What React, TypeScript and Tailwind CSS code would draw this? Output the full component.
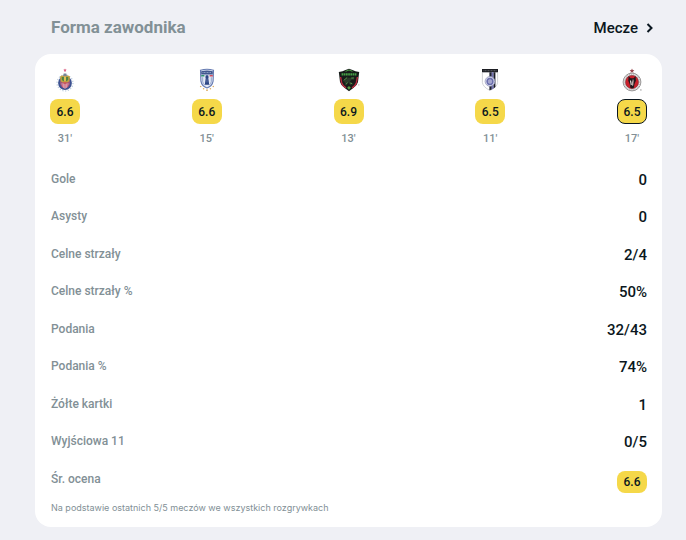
import type { ReactNode } from "react";
import clsx from "clsx";

function Guadalajara() {
  return (
    <svg viewBox="0 0 24 24" className="w-6 h-6" role="img" aria-label="Guadalajara">
      <path d="M12 .6l.5 1 1.2.1-.9.9.2 1.2-1-.6-1 .6.2-1.2-.9-.9 1.2-.1z" fill="#dc5c7e" />
      <circle cx="12" cy="15" r="8" fill="none" stroke="#b9cbdc" strokeWidth="1.2" strokeDasharray="1.2 1.6" />
      <circle cx="12" cy="15" r="6.9" fill="#3c5291" />
      <circle cx="12" cy="15" r="5" fill="#a3557b" />
      <path d="M8.5 15.5h7l-1 3.5-2.5 1.7L9.5 19z" fill="#d9d3e0" />
      <path d="M9.9 15.5v4M12 15.5v5M14.1 15.5v4" stroke="#d33f55" strokeWidth="1" />
      <path d="M7 8.4l1.8-1h6.4l1.8 1-.5 4.9L12 16l-4.5-2.7z" fill="#c2a242" />
      <path d="M8.7 9h2.2v4.6L8.9 12zM13.1 9h2.2l-.2 3-2 1.6z" fill="#4c8342" />
      <path d="M10.7 5.6h2.6l.7 2.6h-4z" fill="#788697" />
      <path d="M11.2 8.5h1.6v4.3h-1.6z" fill="#e8c65a" />
      <path d="M9.2 14.2h5.6l-2.8 2z" fill="#cf4a60" />
    </svg>
  );
}

function Pachuca() {
  return (
    <svg viewBox="0 0 24 24" className="w-6 h-6" role="img" aria-label="Pachuca">
      <path d="M5.5 2.2Q12 .3 18.5 2.2l-.4 11Q17.3 18.2 12 20 6.7 18.2 5.9 13.2z" fill="#e4e9f5" stroke="#6479b0" strokeWidth="1.1" />
      <path d="M6.2 3.2Q12 1.6 17.8 3.2v3.3H6.2z" fill="#41588f" />
      <path d="M7.5 4.5h9" stroke="#a9b7d5" strokeWidth=".7" strokeDasharray="1 .5" />
      <path d="M6.2 7h3.2v1.5H6.2z" fill="#2f9270" />
      <path d="M14.6 7h3.2v1.5h-3.2z" fill="#cf4b5e" />
      <path d="M7.7 9.2v4.6q.5 2.2 2 3.3M16.3 9.2v4.6q-.5 2.2-2 3.3" fill="none" stroke="#93a4cd" strokeWidth="1" />
      <path d="M10.8 7.3h2.4l.4 2-.3 1 .9 6.4H9.8l.9-6.4-.3-1z" fill="#2b4483" />
      <path d="M12 10.5v4" stroke="#8395bd" strokeWidth=".6" />
      <g fill="#dcae68">
        <circle cx="5.7" cy="18.5" r=".8" />
        <circle cx="8.6" cy="20.8" r=".8" />
        <circle cx="12" cy="22.2" r=".9" />
        <circle cx="15.4" cy="20.8" r=".8" />
        <circle cx="18.3" cy="18.5" r=".8" />
      </g>
    </svg>
  );
}

function Juarez() {
  return (
    <svg viewBox="0 0 24 24" className="w-6 h-6" role="img" aria-label="Juárez">
      <path d="M1.8 4Q6 3.8 8.5 2.1L12 .8l3.5 1.3Q18 3.8 22.2 4L21 14q-1 3.8-4.7 6L12 23.2 7.7 20Q4 17.8 3 14z" fill="#171c1a" />
      <path d="M8.5 3.3L12 2l3.5 1.3" fill="none" stroke="#55a84c" strokeWidth=".9" />
      <path d="M4.6 6.3h14.8" stroke="#469e46" strokeWidth="2.2" strokeDasharray="1.7 .5" />
      <path d="M3.6 9l1 5.7Q5.7 18.3 9 19.8M20.4 9l-1 5.7q-1.1 3.6-4.4 5.1" fill="none" stroke="#bb2c40" strokeWidth="1.4" />
      <path d="M7 13.3l4-3.6h4.2l2.3 2.2-2.6-.5-2.3 2.3 2.6 1.1-1.7 2.7-2.3-3.2-2.5 2z" fill="#2c3b2b" />
      <path d="M6.7 12.5l3.5-3M14.3 10h2.8M8.7 16.5l2-1.8M13.3 15.1l2 .8" stroke="#5fae50" strokeWidth=".9" />
      <path d="M12 18.1l1.8 1.6-1.8 2-1.8-2z" fill="#56a046" />
      <path d="M21.3 16.9h1" stroke="#777" strokeWidth=".7" />
    </svg>
  );
}

function Queretaro() {
  return (
    <svg viewBox="0 0 24 24" className="w-6 h-6" role="img" aria-label="Querétaro">
      <path d="M4.4 4.2h15.2v10.3q-.4 4.4-7.6 8-7.2-3.6-7.6-8z" fill="#fff" stroke="#c5c6cc" strokeWidth=".8" />
      <path d="M4 1h16v3.2H4z" fill="#1d1e23" />
      <path d="M5.6 2.7h12.8" stroke="#8d8f97" strokeWidth=".7" strokeDasharray=".8 .7" />
      <path d="M11.4 4.2h2.4v17.4l-2.4.7z" fill="#1f2233" />
      <path d="M13.8 4.2h1.8v16.2l-1.8 1z" fill="#7271b3" />
      <path d="M15.6 4.2h1.8v14.9l-1.8 1.3z" fill="#1b1d25" />
      <circle cx="12" cy="13.4" r="4.9" fill="#d9dbee" stroke="#8e91b6" strokeWidth=".7" />
      <circle cx="12" cy="13.4" r="3.6" fill="#6b6fae" />
      <path d="M10 12.2l2-1.2 2 1.2v2.5L12 16l-2-1.3z" fill="#a5a6ce" />
    </svg>
  );
}

function Tijuana() {
  return (
    <svg viewBox="0 0 24 24" className="w-6 h-6" role="img" aria-label="Tijuana">
      <path d="M12 .4l.7 1.5 1.7.2-1.3 1.1.4 1.7-1.5-.9-1.5.9.4-1.7-1.3-1.1 1.7-.2z" fill="#9b4b52" />
      <circle cx="12" cy="14" r="8.9" fill="#e9e8e8" stroke="#827f7f" strokeWidth=".8" />
      <circle cx="12" cy="14" r="7.9" fill="none" stroke="#aaa6a6" strokeWidth=".9" strokeDasharray="1 1" />
      <circle cx="12" cy="14" r="6.7" fill="#c9202b" stroke="#4b3134" strokeWidth=".4" />
      <path d="M8.6 8l2 2.2h3L15.6 8l.3 4.7-1.4 3.2-.8 4q-1.7.8-3.2 0l-.9-4-1.3-3.2z" fill="#21181b" />
      <path d="M9.9 12.2l1.2.5.6 3.6-.9 1.2z" fill="#efe7e4" />
      <path d="M13 10.8l.7 2-.5 4.6-1.2.4-.2-2.8z" fill="#bfaeab" />
      <circle cx="20.9" cy="21.9" r=".6" fill="#777" />
    </svg>
  );
}

const matches = [
  { crest: <Guadalajara />, rating: "6.6", minutes: "31'" },
  { crest: <Pachuca />, rating: "6.6", minutes: "15'" },
  { crest: <Juarez />, rating: "6.9", minutes: "13'" },
  { crest: <Queretaro />, rating: "6.5", minutes: "11'" },
  { crest: <Tijuana />, rating: "6.5", minutes: "17'", selected: true },
];

const stats = [
  { label: "Gole", value: "0" },
  { label: "Asysty", value: "0" },
  { label: "Celne strzały", value: "2/4" },
  { label: "Celne strzały %", value: "50%" },
  { label: "Podania", value: "32/43" },
  { label: "Podania %", value: "74%" },
  { label: "Żółte kartki", value: "1" },
  { label: "Wyjściowa 11", value: "0/5" },
];

function Rating({ children, className }: { children: ReactNode; className?: string }) {
  return (
    <span
      className={clsx(
        "inline-flex items-center justify-center w-[30px] rounded-lg bg-[#f5d849] text-xs font-medium text-[#0b1720]",
        className
      )}
    >
      {children}
    </span>
  );
}

export default function App() {
  return (
    <main className="min-h-screen bg-[#eff0f5] pl-[35px] pr-6 pt-4 pb-3 font-['Roboto',sans-serif] text-[#0b1720]">
      <header className="flex items-center justify-between h-6 mb-[14px] pl-4 pr-1">
        <h2 className="text-[17px] font-bold text-[#829096]">Forma zawodnika</h2>
        <a href="#mecze" className="flex items-center gap-1 text-[15px] font-medium">
          Mecze
          <svg viewBox="0 0 16 16" className="w-4 h-4" fill="none" stroke="currentColor" strokeWidth="2" aria-hidden="true">
            <path d="M5.5 4l4 4-4 4" />
          </svg>
        </a>
      </header>

      <section className="rounded-2xl bg-white px-[15px] pt-[14px] pb-[11px]">
        <ul className="flex justify-between">
          {matches.map((match, i) => (
            <li key={i} className="flex flex-col items-center w-[30px]">
              {match.crest}
              <Rating className={clsx("h-[25px] mt-[7px]", match.selected && "border border-[#0b1720]")}>
                {match.rating}
              </Rating>
              <span className="mt-[7px] text-[11px] leading-4 font-medium text-[#829096]">{match.minutes}</span>
            </li>
          ))}
        </ul>

        <table className="w-full mt-[13px]">
          <tbody>
            {stats.map((stat) => (
              <tr key={stat.label} className="odd:h-[37px] even:h-[38px]">
                <th scope="row" className="p-0 pl-px text-left text-xs leading-4 font-medium text-[#829096]">
                  {stat.label}
                </th>
                <td className="p-0 pt-0.5 text-right text-[15px] leading-4 font-medium">{stat.value}</td>
              </tr>
            ))}
            <tr className="h-[37px]">
              <th scope="row" className="p-0 pl-px text-left text-xs leading-4 font-medium text-[#829096]">
                Śr. ocena
              </th>
              <td className="p-0 pt-1.5 text-right align-middle leading-none">
                <Rating className="h-[22px] align-middle">6.6</Rating>
              </td>
            </tr>
          </tbody>
        </table>

        <p className="mt-[3px] pl-px font-['Inter',sans-serif] text-[9px] leading-4 text-[#829096]">
          Na podstawie ostatnich 5/5 meczów we wszystkich rozgrywkach
        </p>
      </section>
    </main>
  );
}
